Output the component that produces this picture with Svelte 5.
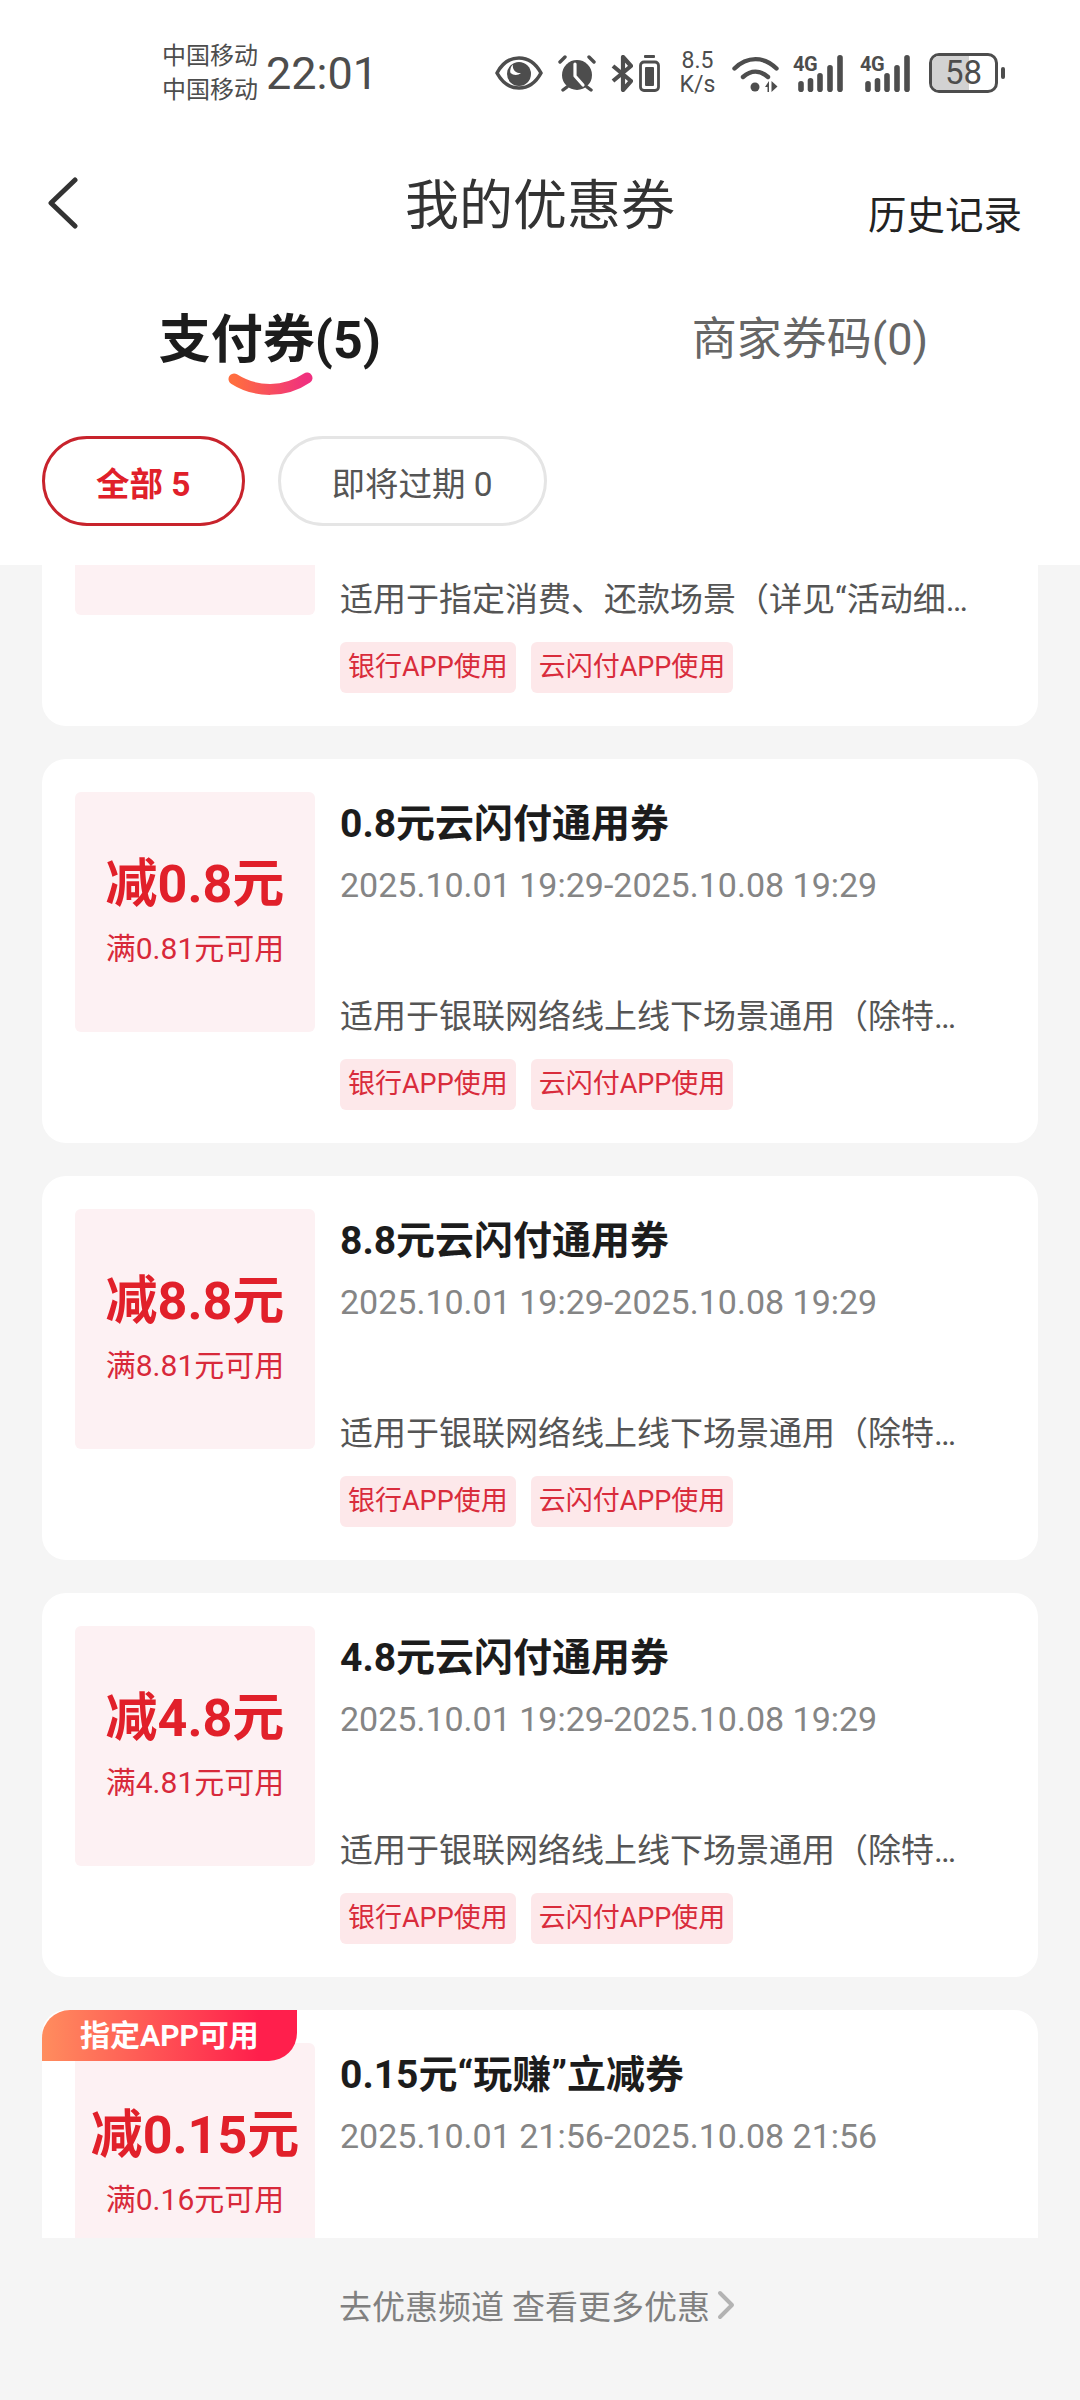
<script lang="ts">
	interface Coupon {
		id: number;
		title?: string;
		date?: string;
		desc?: string;
		amount?: string;
		limit?: string;
		badge?: string;
	}

	const range = '2025.10.01 19:29-2025.10.08 19:29';
	const generalDesc = '适用于银联网络线上线下场景通用\uFF08除特…';

	// first and last coupons only hold what shows above/below the scroll clip
	const coupons: Coupon[] = [
		{ id: 1, desc: '适用于指定消费、还款场景\uFF08详见“活动细…' },
		{ id: 2, title: '0.8元云闪付通用券', date: range, desc: generalDesc, amount: '减0.8元', limit: '满0.81元可用' },
		{ id: 3, title: '8.8元云闪付通用券', date: range, desc: generalDesc, amount: '减8.8元', limit: '满8.81元可用' },
		{ id: 4, title: '4.8元云闪付通用券', date: range, desc: generalDesc, amount: '减4.8元', limit: '满4.81元可用' },
		{
			id: 5,
			title: '0.15元“玩赚”立减券',
			date: '2025.10.01 21:56-2025.10.08 21:56',
			amount: '减0.15元',
			limit: '满0.16元可用',
			badge: '指定APP可用'
		}
	];

	const tags = ['银行APP使用', '云闪付APP使用'];
	const battery = 58;
	const signalBars = [
		{ x: 8, h: 11 },
		{ x: 17.5, h: 14 },
		{ x: 27, h: 19 },
		{ x: 37, h: 27 },
		{ x: 47, h: 37 }
	];
</script>

<div class="page">
	<header class="top">
		<div class="status">
			<div class="carrier">
				<span>中国移动</span>
				<span>中国移动</span>
			</div>
			<div class="time">22:01</div>
			<div class="icons">
				<svg class="eye" width="48" height="34" viewBox="0 0 48 34">
					<path d="M2 17C8 6 15 2 24 2s16 4 22 15c-6 11-13 15-22 15S8 28 2 17Z" fill="none" stroke="currentColor" stroke-width="3.600" stroke-linejoin="round" />
					<circle cx="24" cy="18" r="12" fill="currentColor" />
					<path d="M18 8.500a7 7 0 0 0 8 8.500a8 8 0 0 1-10.500 0a9 9 0 0 1 2.500-8.500Z" fill="#fff" />
				</svg>
				<svg class="alarm" width="38" height="37" viewBox="0 0 38 37">
					<circle cx="19" cy="20" r="15" fill="currentColor" />
					<path d="M17 9v12l8 9" fill="none" stroke="#fff" stroke-width="3.200" stroke-linecap="round" stroke-linejoin="round" />
					<path d="M2 7l5-5M36 7l-5-5M5 35l4-3M33 35l-4-3" fill="none" stroke="currentColor" stroke-width="3.400" stroke-linecap="round" />
				</svg>
				<svg class="bt" width="22" height="37" viewBox="0 0 22 37">
					<path d="M2 11l18 15-8 9V2l8 9L2 26" fill="none" stroke="currentColor" stroke-width="4.200" stroke-linejoin="round" />
				</svg>
				<svg class="cell" width="21" height="37" viewBox="0 0 21 37">
					<rect x="5" y="0" width="11" height="3" rx="1" fill="currentColor" />
					<rect x="1.500" y="7" width="18" height="28.500" rx="3.500" fill="none" stroke="currentColor" stroke-width="2.800" />
					<rect x="6" y="12" width="9" height="19" rx="1" fill="currentColor" />
				</svg>
				<div class="speed">
					<span>8.5</span>
					<span>K/s</span>
				</div>
				<svg class="wifi" width="47" height="37" viewBox="0 0 47 37">
					<path d="M2.500 13.500C15 1 32 1 44.500 13.500M11 22c8-7 17-7 25 0" fill="none" stroke="currentColor" stroke-width="4.400" stroke-linecap="round" />
					<circle cx="23" cy="32" r="4.500" fill="currentColor" />
					<path d="M33 32l4-6v11h-1.500v-5ZM39.500 26v11l6-5.500Z" fill="currentColor" />
				</svg>
				{#each [0, 1] as sim (sim)}
					<div class="signal">
						<span>4G</span>
						<svg width="53" height="37" viewBox="0 0 53 37">
							{#each signalBars as bar (bar.x)}
								<rect x={bar.x - 2.800} y={37 - bar.h} width="5.600" height={bar.h} rx="2.800" fill="currentColor" />
							{/each}
						</svg>
					</div>
				{/each}
				<div class="battery">
					<div class="battery-body">
						<div class="battery-fill" style="width: {battery}%"></div>
						<span>{battery}</span>
					</div>
					<div class="battery-nub"></div>
				</div>
			</div>
		</div>

		<nav class="nav">
			<svg class="back" width="34" height="52" viewBox="0 0 34 52">
				<path d="M29 3L5 26l24 23" fill="none" stroke="#333" stroke-width="5" stroke-linecap="round" stroke-linejoin="round" />
			</svg>
			<h1>我的优惠券</h1>
			<div class="history">历史记录</div>
		</nav>

		<div class="tabs">
			<div class="tab active">
				支付券(5)
				<svg class="smile" width="85" height="25" viewBox="0 0 85 25">
					<defs>
						<linearGradient id="smile-grad" x1="0" x2="1" y1="0" y2="0">
							<stop offset="0" stop-color="#ff6d3f" />
							<stop offset="1" stop-color="#f0307f" />
						</linearGradient>
					</defs>
					<path d="M6 7C28 21 57 21 79 6" fill="none" stroke="url(#smile-grad)" stroke-width="11" stroke-linecap="round" />
				</svg>
			</div>
			<div class="tab">商家券码(0)</div>
		</div>

		<div class="chips">
			<div class="chip on">全部 5</div>
			<div class="chip">即将过期 0</div>
		</div>
	</header>

	<main class="list">
		<div class="scroller">
			{#each coupons as c (c.id)}
				<article class="card">
					{#if c.badge}
						<div class="badge">{c.badge}</div>
					{/if}
					<div class="thumb">
						{#if c.amount}
							<div class="amount">{c.amount}</div>
							<div class="limit">{c.limit}</div>
						{/if}
					</div>
					<div class="info">
						{#if c.title}
							<div class="title">{c.title}</div>
							<div class="date">{c.date}</div>
						{/if}
						{#if c.desc}
							<div class="desc">{c.desc}</div>
							<div class="tags">
								{#each tags as t (t)}
									<span class="tag">{t}</span>
								{/each}
							</div>
						{/if}
					</div>
				</article>
			{/each}
		</div>
	</main>

	<footer class="more">
		<span>去优惠频道 查看更多优惠</span>
		<svg width="18" height="30" viewBox="0 0 18 30">
			<path d="M3 3l12 12L3 27" fill="none" stroke="#b3b3b3" stroke-width="4" stroke-linecap="round" stroke-linejoin="round" />
		</svg>
	</footer>
</div>

<style>
	:global(body) {
		background: #f5f5f5;
	}

	.page {
		display: flex;
		flex-direction: column;
		height: 2400px;
		overflow: hidden;
		font-family: Roboto, 'Noto Sans CJK SC', sans-serif;
	}

	.top {
		background: #fff;
		height: 565px;
		flex: none;
	}

	.status {
		display: flex;
		align-items: center;
		height: 146px;
		padding: 0 75px 0 162px;
		color: #4d4d4d;
	}

	.carrier {
		display: flex;
		flex-direction: column;
		font-size: 24px;
		line-height: 34px;
		width: 104px;
		flex: none;
	}

	.time {
		font-size: 45px;
	}

	.icons {
		display: flex;
		align-items: center;
		margin-left: auto;
	}

	.alarm {
		margin-left: 15px;
	}

	.bt {
		margin-left: 15px;
	}

	.cell {
		margin-left: 6px;
	}

	.speed {
		display: flex;
		flex-direction: column;
		align-items: center;
		width: 35px;
		margin-left: 20px;
		font-size: 23px;
		line-height: 24px;
	}

	.wifi {
		margin-left: 17px;
	}

	.signal {
		position: relative;
		width: 53px;
		height: 37px;
		margin-left: 14px;
	}

	.signal svg {
		display: block;
	}

	.signal span {
		position: absolute;
		left: 0;
		top: 0;
		font-size: 20px;
		font-weight: 700;
		line-height: 18px;
		letter-spacing: -0.5px;
	}

	.battery {
		display: flex;
		align-items: center;
		gap: 3px;
		margin-left: 16px;
	}

	.battery-body {
		position: relative;
		box-sizing: border-box;
		width: 69px;
		height: 40px;
		border: 3px solid #4d4d4d;
		border-radius: 10px;
		overflow: hidden;
	}

	.battery-fill {
		height: 100%;
		background: #d2d2d2;
	}

	.battery-body span {
		position: absolute;
		inset: 0;
		text-align: center;
		font-size: 33px;
		line-height: 34px;
	}

	.battery-nub {
		width: 4px;
		height: 12px;
		border-radius: 2px;
		background: #4d4d4d;
	}

	.nav {
		position: relative;
		display: flex;
		justify-content: center;
		align-items: center;
		height: 116px;
		padding-bottom: 6px;
		box-sizing: border-box;
	}

	.back {
		position: absolute;
		left: 46px;
		top: 31px;
	}

	h1 {
		margin: 0;
		font-size: 54px;
		font-weight: 400;
		color: #333;
	}

	.history {
		position: absolute;
		right: 58px;
		top: 45px;
		font-size: 38.500px;
		line-height: 50px;
		color: #222;
	}

	.tabs {
		display: grid;
		grid-template-columns: 1fr 1fr;
		height: 156px;
		padding-top: 48px;
		box-sizing: border-box;
	}

	.tab {
		position: relative;
		height: 60px;
		line-height: 60px;
		text-align: center;
		font-size: 45px;
		color: #666;
	}

	.tab.active {
		font-size: 52px;
		font-weight: 700;
		color: #1c1c1c;
		padding-top: 1px;
	}

	.smile {
		position: absolute;
		left: 228px;
		top: 62px;
	}

	.chips {
		display: flex;
		gap: 33px;
		padding: 18px 0 0 42px;
	}

	.chip {
		box-sizing: border-box;
		display: flex;
		align-items: center;
		height: 90px;
		padding: 0 51px;
		border: 3px solid #e5e5e5;
		border-radius: 45px;
		font-size: 33.500px;
		color: #555;
	}

	.chip.on {
		border-color: #c8232c;
		font-weight: 700;
		color: #e0202a;
	}

	.list {
		flex: 1;
		overflow: hidden;
	}

	/* list is scrolled, first coupon is partly hidden behind the header */
	.scroller {
		display: flex;
		flex-direction: column;
		gap: 33px;
		margin-top: -223px;
		padding: 0 42px;
	}

	.card {
		position: relative;
		display: flex;
		gap: 25px;
		height: 384px;
		box-sizing: border-box;
		padding: 33px;
		flex: none;
		background: #fff;
		border-radius: 24px;
	}

	.badge {
		position: absolute;
		left: 0;
		top: 0;
		width: 255px;
		height: 51px;
		padding-left: 38px;
		box-sizing: border-box;
		border-radius: 28px 0 28px 0;
		background: linear-gradient(90deg, #ff8d5e, #ff1f4c 85%);
		color: #fff;
		font-size: 30px;
		font-weight: 700;
		line-height: 51px;
	}

	.thumb {
		flex: none;
		display: flex;
		flex-direction: column;
		align-items: center;
		justify-content: center;
		width: 240px;
		height: 240px;
		border-radius: 6px;
		background: #fdf1f3;
		color: #e1202a;
	}

	.amount {
		margin-top: 2px;
		font-size: 52px;
		font-weight: 700;
		line-height: 60px;
	}

	.limit {
		margin-top: 12px;
		font-size: 30px;
		line-height: 44px;
		color: #d8293a;
	}

	.info {
		display: flex;
		flex-direction: column;
		flex: 1;
		min-width: 0;
	}

	.title {
		margin-top: 7px;
		font-size: 39px;
		font-weight: 700;
		line-height: 50px;
		color: #1c1c1c;
	}

	.date {
		margin-top: 12px;
		font-size: 34px;
		line-height: 48px;
		color: #858585;
	}

	.desc {
		margin-top: auto;
		font-size: 33px;
		line-height: 48px;
		white-space: nowrap;
		color: #555;
	}

	.tags {
		display: flex;
		gap: 15px;
		margin-top: 18px;
	}

	.tag {
		height: 51px;
		padding: 0 8px;
		border-radius: 6px;
		background: #fde8ea;
		color: #d92c3c;
		font-size: 27px;
		line-height: 51px;
	}

	.more {
		display: flex;
		justify-content: center;
		align-items: center;
		gap: 7px;
		flex: none;
		height: 134px;
		padding: 0 6px 28px 0;
		font-size: 33px;
		color: #808080;
	}
</style>
